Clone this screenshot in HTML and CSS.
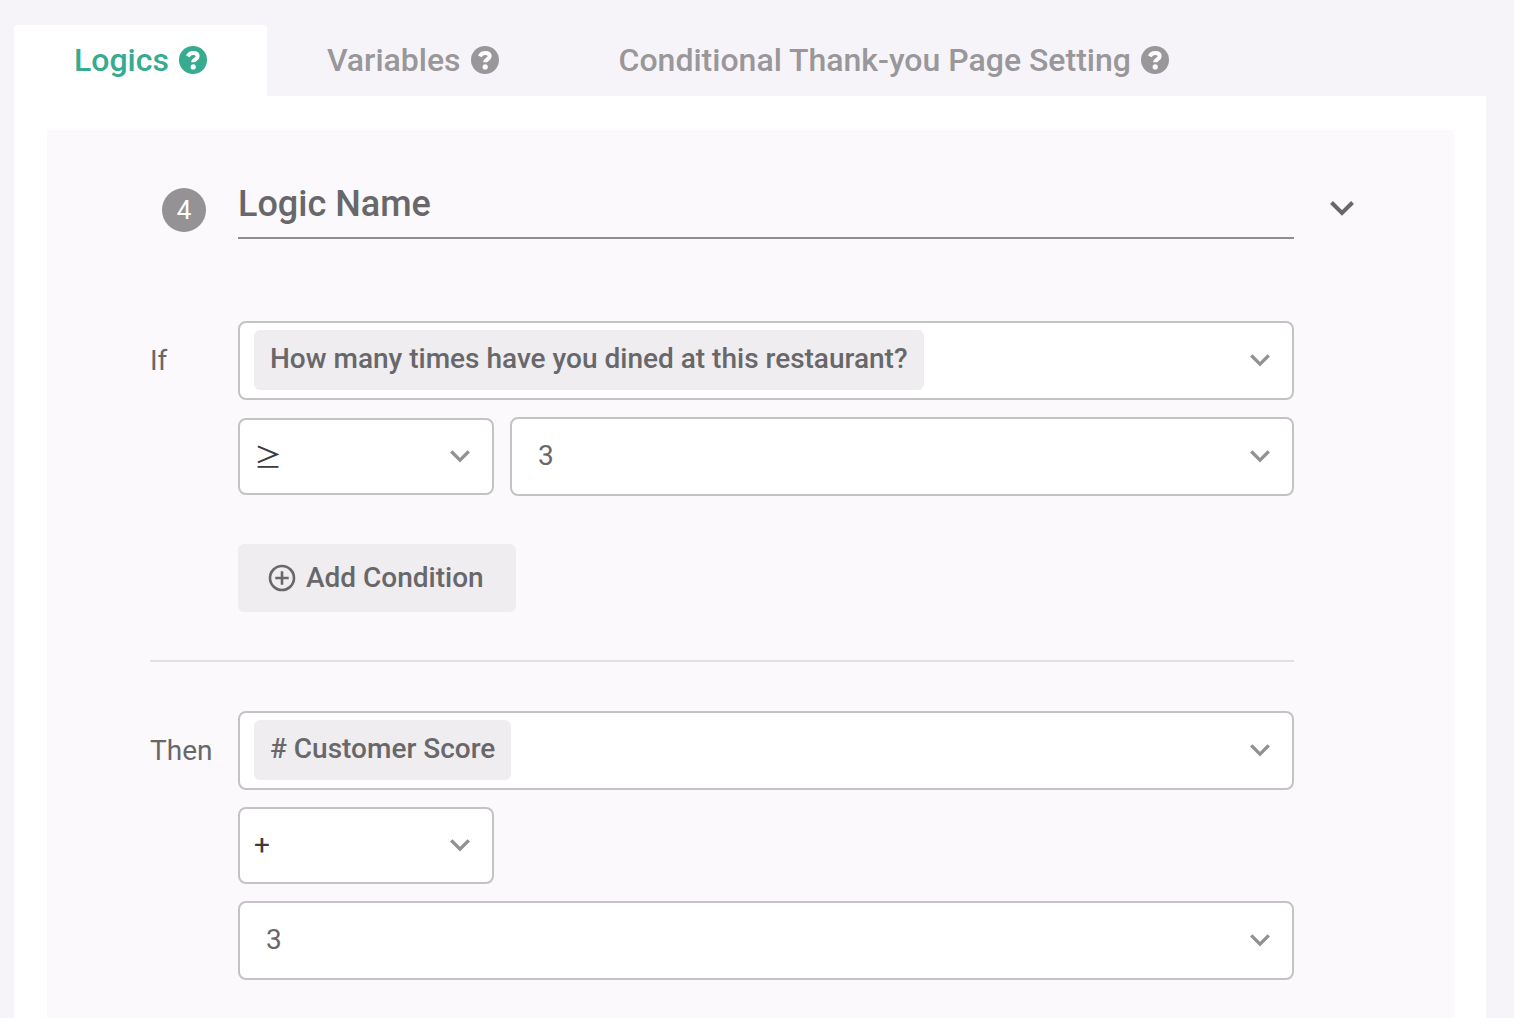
FILE: index.html
```html
<!DOCTYPE html>
<html lang="en">
<head>
<meta charset="utf-8">
<meta name="viewport" content="width=device-width, initial-scale=1">
<title>Logics</title>
<link rel="stylesheet" href="styles.css">
</head>
<body>
<svg class="sprite" aria-hidden="true">
  <symbol id="help" viewBox="0 0 28 28">
    <circle cx="14" cy="14" r="14" fill="currentColor"/>
    <path class="help-hook" d="M8.800 10.300C9.900 8.100 11.700 7.100 14.200 7.100c2.700 0 4.500 1.200 4.500 3.200 0 3-4.500 2.900-4.500 6"/>
    <circle class="help-dot" cx="14.200" cy="20.900" r="2.600"/>
  </symbol>
  <symbol id="chevron" viewBox="0 0 24 16">
    <path d="M1.500 2.500L12 13 22.500 2.500" fill="none" stroke="currentColor" stroke-width="4"/>
  </symbol>
  <symbol id="plus" viewBox="0 0 28 28">
    <g fill="none" stroke="currentColor" stroke-width="2.600"><circle cx="14" cy="14" r="12"/><path d="M14 7.300v13.400M7.300 14h13.400"/></g>
  </symbol>
</svg>
<div class="page">
  <nav class="tabs" role="tablist">
    <button class="tab tab-active" type="button" role="tab" aria-selected="true">Logics<svg class="help"><use href="#help"/></svg></button>
    <button class="tab" type="button" role="tab" aria-selected="false">Variables<svg class="help"><use href="#help"/></svg></button>
    <button class="tab" type="button" role="tab" aria-selected="false">Conditional Thank-you Page Setting<svg class="help"><use href="#help"/></svg></button>
  </nav>
  <main class="panel">
    <form class="card">
      <header class="card-header">
        <span class="badge">4</span>
        <input class="name" type="text" value="Logic Name" aria-label="Logic name">
        <button class="toggle" type="button" aria-label="Collapse"><svg class="chevron-large"><use href="#chevron"/></svg></button>
      </header>

      <section class="rule">
        <label class="rule-label" for="if-field">If</label>
        <div class="rule-fields">
          <button class="field" id="if-field" type="button" aria-haspopup="listbox">
            <span class="chip">How many times have you dined at this restaurant?</span>
            <svg class="chevron"><use href="#chevron"/></svg>
          </button>
          <div class="pair">
            <div class="field field-small">
              <select class="operator operator-compare" aria-label="Comparison"><option>≥</option></select>
              <svg class="chevron"><use href="#chevron"/></svg>
            </div>
            <div class="field">
              <select class="value" aria-label="Compared value"><option>3</option></select>
              <svg class="chevron"><use href="#chevron"/></svg>
            </div>
          </div>
          <button class="add" type="button"><svg class="plus"><use href="#plus"/></svg>Add Condition</button>
        </div>
      </section>

      <hr class="divider">

      <section class="rule">
        <label class="rule-label" for="then-field">Then</label>
        <div class="rule-fields">
          <button class="field" id="then-field" type="button" aria-haspopup="listbox">
            <span class="chip"># Customer Score</span>
            <svg class="chevron"><use href="#chevron"/></svg>
          </button>
          <div class="field field-small">
            <select class="operator" aria-label="Operation"><option>+</option></select>
            <svg class="chevron"><use href="#chevron"/></svg>
          </div>
          <div class="field">
            <select class="value" aria-label="Amount"><option>3</option></select>
            <svg class="chevron"><use href="#chevron"/></svg>
          </div>
        </div>
      </section>
    </form>
  </main>
</div>
</body>
</html>
```
FILE: styles.css
```css
* { box-sizing: border-box; }

body {
  margin: 0;
  background: #f6f4f8;
  color: #68676a;
  font-family: Roboto, "Liberation Sans", sans-serif;
  font-size: 28px;
  line-height: 32px;
}

button, input, select {
  margin: 0;
  padding: 0;
  border: 0;
  background: none;
  color: inherit;
  font: inherit;
}

.sprite { position: absolute; width: 0; height: 0; }
.help-hook { fill: none; stroke: #fff; stroke-width: 4; }
.help-dot { fill: #fff; }

.page {
  display: flex;
  flex-direction: column;
  min-height: 100vh;
  padding: 25px 28px 0 14px;
}

.tabs { display: flex; }

.tab {
  display: flex;
  align-items: center;
  gap: 10px;
  height: 71px;
  padding: 0 60px 1px;
  color: #99979a;
  font-size: 32px;
  font-weight: 500;
  white-space: nowrap;
}

.tab-active { background: #fff; color: #36ab8f; border-radius: 4px 4px 0 0; }
.help { flex: none; width: 28px; height: 28px; }

.panel {
  display: flex;
  flex: 1;
  padding: 34px 32px 0 33px;
  background: #fff;
}

.card {
  flex: 1;
  min-width: 0;
  padding: 50px 160px 38px 103px;
  background: #fbf9fc;
}

.card-header {
  display: flex;
  align-items: center;
  margin: 0 -64px 82px 12px;
}

.badge {
  flex: none;
  width: 44px;
  height: 44px;
  margin-right: 32px;
  border-radius: 50%;
  background: #949294;
  color: #fff;
  font-size: 26px;
  line-height: 44px;
  text-align: center;
}

.name {
  flex: 1;
  min-width: 0;
  height: 59px;
  padding-bottom: 10px;
  border-bottom: 2px solid #8f8d91;
  font-size: 36px;
  font-weight: 500;
}

.toggle {
  display: flex;
  margin-left: 32px;
  padding: 4px 4px 8px;
}

.chevron-large { width: 24px; height: 16px; }

.rule { display: flex; }

.rule-label { flex: none; width: 88px; line-height: 79px; }

.rule-fields {
  display: flex;
  flex: 1;
  flex-direction: column;
  gap: 17px;
  min-width: 0;
}

.field {
  display: flex;
  align-items: center;
  position: relative;
  flex: 1 0 auto;
  height: 79px;
  border: 2px solid #c4c2c5;
  border-radius: 8px;
  background: #fff;
  padding: 0 0 2px 14px;
}

.field-small { flex: none; width: 256px; height: 77px; }

.chip {
  padding: 13px 16px 15px;
  border-radius: 6px;
  background: #efedf0;
  font-weight: 500;
}

.field select {
  flex: 1;
  align-self: stretch;
  appearance: none;
}

.field .value { padding-left: 12px; }
.field .operator { color: #3c3b3e; }
.field .operator-compare { font-family: "Noto Sans CJK JP", sans-serif; }

.chevron {
  position: absolute;
  right: 22px;
  width: 20px;
  height: 14px;
  color: #929094;
  pointer-events: none;
}

.pair { display: flex; align-items: center; gap: 16px; }

.add {
  display: flex;
  align-items: center;
  align-self: flex-start;
  gap: 10px;
  height: 68px;
  margin-top: 31px;
  padding: 0 32px 0 30px;
  border-radius: 6px;
  background: #efedf0;
  font-weight: 500;
}

.plus { width: 28px; height: 28px; }

.divider {
  height: 2px;
  margin: 48px 0 49px;
  border: 0;
  background: #e2e0e4;
}
```
